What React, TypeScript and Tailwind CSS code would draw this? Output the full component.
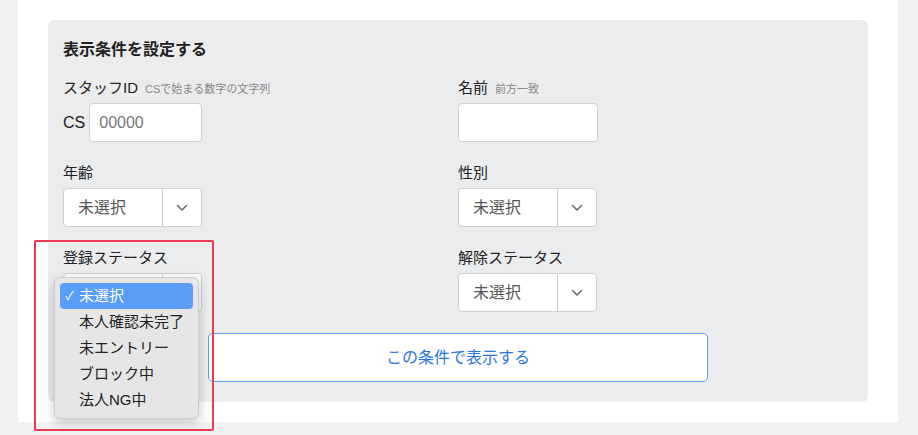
import type { ReactNode } from 'react';

const FONT = '"Liberation Sans", "Noto Sans CJK JP", sans-serif';

// ── Parts ─────────────────────────────────────────────────────────────────────

function Chevron() {
  return (
    <svg width="12" height="8" viewBox="0 0 12 8" fill="none">
      <polyline points="1.5,1.5 6,6 10.5,1.5" stroke="#6b6b6b" strokeWidth="1.6" strokeLinecap="round" strokeLinejoin="round" />
    </svg>
  );
}

function Label({ text, note }: { text: string; note?: string }) {
  return (
    <div className="flex h-[20px] items-baseline gap-[7px] leading-[20px]">
      <span className="text-[15px] text-[#222]">{text}</span>
      {note && <span className="text-[11px] text-[#888]">{note}</span>}
    </div>
  );
}

function Select({ value = '未選択' }: { value?: string }) {
  return (
    <div className="mt-[5px] flex h-[39px] w-[139px] rounded-[4px] border border-[#cfcfcf] bg-white">
      <div className="flex w-[99px] items-center border-r border-[#cfcfcf] pl-[14px] text-[16px] text-[#555]">
        {value}
      </div>
      <div className="flex flex-1 items-center justify-center">
        <Chevron />
      </div>
    </div>
  );
}

function Field({ children }: { children: ReactNode }) {
  return <div className="relative flex flex-col">{children}</div>;
}

// ── Open menu ─────────────────────────────────────────────────────────────────

const OPTIONS = ['未選択', '本人確認未完了', '未エントリー', 'ブロック中', '法人NG中'];

function OpenMenu() {
  return (
    <div className="absolute left-[-9px] top-[29px] z-20 w-[145px] rounded-[6px] border border-[#cdcdcd] bg-[#e6e6e6] px-[5px] py-[5px] shadow-[0_4px_12px_rgba(0,0,0,0.22)]">
      {OPTIONS.map((o, i) => (
        <div
          key={o}
          className={`flex h-[26px] items-center rounded-[4px] text-[15px] ${i === 0 ? 'bg-[#5a9df7] text-white' : 'text-[#222]'}`}
        >
          <span className="flex w-[19px] justify-center text-[12px] leading-none">{i === 0 ? '✓' : ''}</span>
          <span>{o}</span>
        </div>
      ))}
    </div>
  );
}

// ── Page ──────────────────────────────────────────────────────────────────────

export default function App() {
  return (
    <div className="h-[435px] w-[918px] overflow-hidden bg-[#f2f2f2]" style={{ fontFamily: FONT }}>
      <div className="ml-[18px] h-[422px] w-[880px] bg-white pt-[20px]">
        <div className="ml-[30px] w-[820px] rounded-[6px] bg-[#ebecee] px-[15px] pb-[20px] pt-[19px]">
          <h2 className="text-[16px] font-bold leading-[22px] text-[#222]">表示条件を設定する</h2>

          <div className="mt-[17px] grid grid-cols-[395px_1fr] gap-y-[21px]">
            <Field>
              <Label text="スタッフID" note="CSで始まる数字の文字列" />
              <div className="mt-[5px] flex items-center gap-[4px]">
                <span className="text-[16px] text-[#222]">CS</span>
                <div className="flex h-[39px] w-[113px] items-center rounded-[4px] border border-[#cfcfcf] bg-white pl-[9px] text-[16px] text-[#777]">
                  00000
                </div>
              </div>
            </Field>
            <Field>
              <Label text="名前" note="前方一致" />
              <div className="mt-[5px] h-[39px] w-[140px] rounded-[4px] border border-[#cfcfcf] bg-white" />
            </Field>

            <Field>
              <Label text="年齢" />
              <Select />
            </Field>
            <Field>
              <Label text="性別" />
              <Select />
            </Field>

            <Field>
              <Label text="登録ステータス" />
              {/* value hidden under the open menu */}
              <Select value="" />
              <OpenMenu />
              <div className="pointer-events-none absolute left-[-29px] top-[-8px] z-30 h-[191px] w-[180px] rounded-[2px] border-2 border-[#ef3a52]" />
            </Field>
            <Field>
              <Label text="解除ステータス" />
              <Select />
            </Field>
          </div>

          <div className="mt-[21px] flex justify-center">
            <div
              role="button"
              className="flex h-[49px] w-[500px] items-center justify-center rounded-[5px] border border-[#5b9be9] bg-white text-[16px] text-[#2a78dc]"
            >
              この条件で表示する
            </div>
          </div>
        </div>
      </div>
    </div>
  );
}
